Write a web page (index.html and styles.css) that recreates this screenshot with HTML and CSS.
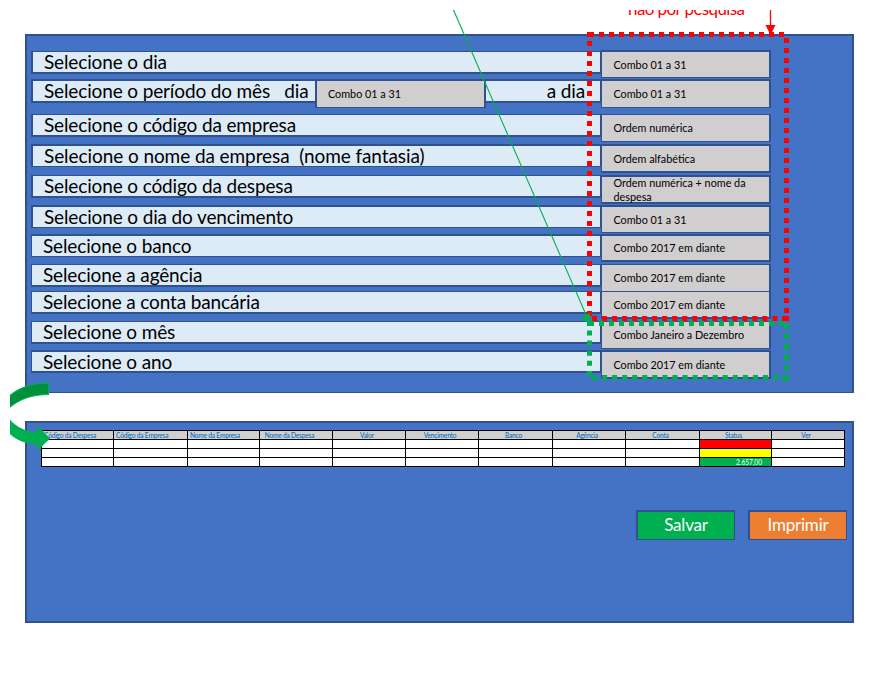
FILE: index.html
```
<!DOCTYPE html>
<html lang="pt-BR">
<head>
<meta charset="utf-8">
<title>Filtros de despesas</title>
<link rel="stylesheet" href="styles.css">
</head>
<body>
<main class="page">
  <div class="note"><span>não por pesquisa</span></div>
  <section class="panel filters">
    <div class="row r1"><div class="label">Selecione o dia</div><div class="combo">Combo 01 a 31</div></div>
    <div class="row r2"><div class="label"><span>Selecione o período do mês &nbsp; dia</span><span class="until">a dia</span></div><div class="combo">Combo 01 a 31</div><div class="combo inner">Combo 01 a 31</div></div>
    <div class="row r3"><div class="label">Selecione o código da empresa</div><div class="combo">Ordem numérica</div></div>
    <div class="row r4"><div class="label">Selecione o nome da empresa &nbsp;(nome fantasia)</div><div class="combo">Ordem alfabética</div></div>
    <div class="row r5"><div class="label">Selecione o código da despesa</div><div class="combo">Ordem numérica + nome da<br>despesa</div></div>
    <div class="row r6"><div class="label">Selecione o dia do vencimento</div><div class="combo">Combo 01 a 31</div></div>
    <div class="row r7"><div class="label">Selecione o banco</div><div class="combo">Combo 2017 em diante</div></div>
    <div class="row r8"><div class="label">Selecione a agência</div><div class="combo">Combo 2017 em diante</div></div>
    <div class="row r9"><div class="label">Selecione a conta bancária</div><div class="combo">Combo 2017 em diante</div></div>
    <div class="row r10"><div class="label">Selecione o mês</div><div class="combo">Combo Janeiro a Dezembro</div></div>
    <div class="row r11"><div class="label">Selecione o ano</div><div class="combo">Combo 2017 em diante</div></div>
  </section>
  <section class="panel results">
    <div class="table">
      <div class="th">Código da Despesa</div><div class="th">Código da Empresa</div><div class="th">Nome da Empresa</div><div class="th">Nome da Despesa</div><div class="th">Valor</div><div class="th">Vencimento</div><div class="th">Banco</div><div class="th">Agência</div><div class="th">Conta</div><div class="th">Status</div><div class="th">Ver</div>
      <div></div><div></div><div></div><div></div><div></div><div></div><div></div><div></div><div></div><div class="late"></div><div></div>
      <div></div><div></div><div></div><div></div><div></div><div></div><div></div><div></div><div></div><div class="due"></div><div></div>
      <div></div><div></div><div></div><div></div><div></div><div></div><div></div><div></div><div></div><div class="paid">2.657,00</div><div></div>
    </div>
    <div class="actions"><button class="save">Salvar</button><button class="print">Imprimir</button></div>
  </section>
  <svg class="overlay" width="881" height="696" viewBox="0 0 881 696">
    <g fill="none" stroke="#f00" stroke-width="5">
      <path d="M587 34.500H594"/>
      <path d="M599 34.500H785" stroke-dasharray="5 5"/>
      <path d="M589.500 32V37"/>
      <path d="M589.500 41V316" stroke-dasharray="5 5"/>
      <path d="M786.500 38V321" stroke-dasharray="5 5"/>
      <path d="M592 318.500H780" stroke-dasharray="5 5.020"/>
      <path d="M782 318.500H789"/>
    </g>
    <g fill="none" stroke="#00b050">
      <path d="M453.500 10L587 317" stroke-width="1.100"/>
      <path d="M580.500 318L590 313L589.500 324Z" fill="#00b050" stroke="none"/>
      <g stroke-width="5">
        <path d="M587 323.500H594"/>
        <path d="M599 323.500H785" stroke-dasharray="5 5"/>
        <path d="M589.500 330.500V376" stroke-dasharray="5 5.100"/>
        <path d="M786.500 323.500V381" stroke-dasharray="5.500 4.800"/>
        <path d="M592 377.500H779" stroke-dasharray="5 5.060"/>
        <path d="M782 377.500H789"/>
      </g>
    </g>
    <path d="M770.500 10V27" stroke="#f00" stroke-width="1.300"/>
    <path d="M765.500 25H775.500L770.500 35Z" fill="#f00"/>
    <path d="M10 395.500C20 387 33 383 48.500 383V394.500C33 394.500 20 399 10 407" fill="#008f3c" stroke="#00b050" stroke-width="1.200"/>
    <path d="M10 419.500C16 427 26 431.500 37 432.500V425L50 438.500L37 451V445C25 443.500 16 440 10 434Z" fill="#00b050"/>
  </svg>
</main>
</body>
</html>
```
FILE: styles.css
```
* { box-sizing: border-box; }
body { margin: 0; background: #fff; font-family: Lato, "Liberation Sans", sans-serif; }
.page { position: relative; width: 881px; height: 696px; padding: 10px 27px 0 25px; overflow: hidden; }
.note { height: 24px; overflow: hidden; padding-left: 603px; color: #f00; font-size: 17px; letter-spacing: -0.600px; line-height: 20px; white-space: nowrap; }
.note span { display: block; margin-top: -11px; }
.panel { background: #4472c4; border: 2px solid #2f528f; width: 829px; }
.filters { height: 359px; padding: 14px 0 0 4px; border-bottom-width: 1px; }
.row { position: relative; display: flex; align-items: flex-start; white-space: nowrap; }
.label { display: flex; justify-content: space-between; width: 571px; height: 23px; padding: 0 15px 0 11px; background: #ddebf7; border: 1px solid #2f528f; border-width: 1px 2px 2px; color: #000; font-size: 19px; letter-spacing: -0.140px; line-height: 20px; }
.combo { display: flex; align-items: center; width: 170px; height: 28px; margin-left: -1px; padding: 0 0 0 11.500px; background: #d0cece; border: 1px solid #2f528f; border-right-width: 2px; color: #000; font-size: 10.800px; line-height: 14px; }
.combo.inner { position: absolute; left: 284px; top: 0; width: 171px; height: 29px; margin: 0; border-width: 2px 2px 1px; padding-left: 11px; }
.r1 { height: 29px; }
.r1 .label { margin-top: 1px; }
.r1 .combo { border-top-width: 2px; }
.r2 { height: 35px; }
.r2 .label { height: 24px; border-top-width: 2px; }
.r2 .combo { height: 29px; border-top-width: 2px; }
.r3 { height: 30px; }
.r4 { height: 31px; }
.r4 .label { border-width: 2px 2px 1px; letter-spacing: -0.080px; }
.r4 .combo { height: 29px; border-width: 2px 2px 2px 1px; }
.r5 { height: 30px; }
.r5 .combo { height: 29px; border-width: 2px 2px 2px 1px; }
.r6 { height: 29px; }
.r6 .label, .r7 .label { border-width: 2px 2px 1px; }
.r6 .combo { border-top-width: 2px; }
.r7 { height: 30px; }
.r7 .combo { border-top-width: 2px; border-bottom-width: 2px; }
.r8 { height: 27px; }
.r9 { height: 30px; }
.r9 .combo { border-bottom-width: 2px; }
.r10 { height: 29px; }
.r11 .label { border-top-width: 2px; }
.r11 .combo { height: 29px; border-width: 2px 2px 2px 1px; }
.r7 .label, .r8 .label, .r9 .label, .r10 .label, .r11 .label { border-left-width: 1px; }
.results { height: 202px; margin-top: 28px; padding: 7px 0 0 14px; }
.table { display: grid; grid-template-columns: 71px 73px 71px 72px 72px 72px 73px 72px 73px 71px 72px; grid-template-rows: repeat(4, 8px); gap: 1px; width: 804px; padding: 1px; background: #000; }
.table div { background: #fff; overflow: hidden; white-space: nowrap; }
.table .th { background: #d0cece; color: #0070c0; font-size: 6.600px; font-weight: 500; letter-spacing: -0.200px; line-height: 9px; text-align: center; padding-right: 4px; }
.table .th:nth-child(-n+3) { text-align: left; padding-left: 2px; }
.table .th:nth-child(4) { padding-right: 13px; }
.table .late { background: #f00; }
.table .due { background: #ff0; }
.table .paid { background: #00b050; color: #fff; font-size: 6.600px; line-height: 9px; text-align: right; padding-right: 9px; }
.actions { display: flex; justify-content: flex-end; gap: 13px; margin: 43px 5px 0 0; }
.actions button { width: 99px; height: 30px; padding: 0 0 2px; border: 2px solid #2f528f; border-width: 2px 1px 1px 2px; color: #fff; font: 17px/24px Lato, "Liberation Sans", sans-serif; letter-spacing: -0.200px; }
.save { background: #00b050; }
.print { background: #ed7d31; }
.overlay { position: absolute; left: 0; top: 0; pointer-events: none; }
```
